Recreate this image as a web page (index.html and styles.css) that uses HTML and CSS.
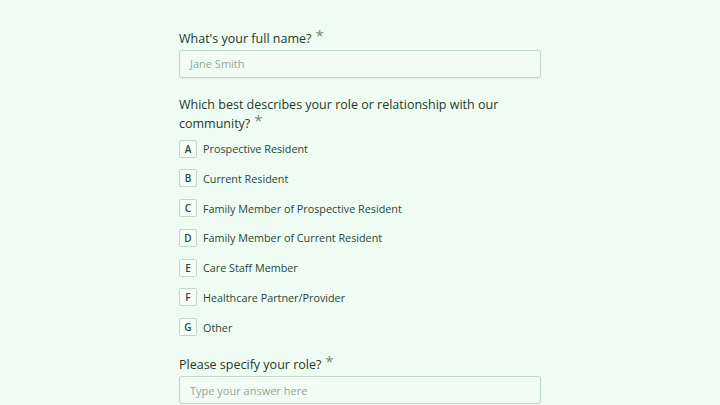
FILE: index.html
```html
<!DOCTYPE html>
<html>
<head>
<meta charset="utf-8">
<link rel="stylesheet" href="styles.css">
</head>
<body>
<main class="form">
  <section class="q q-first">
    <label class="label">What's your full name?<span class="req">*</span></label>
    <div class="input placeholder">Jane Smith</div>
  </section>
  <section class="q">
    <label class="label">Which best describes your role or relationship with our community?<span class="req">*</span></label>
    <ul class="options">
      <li class="opt"><span class="key">A</span><span class="txt">Prospective Resident</span></li>
      <li class="opt"><span class="key">B</span><span class="txt">Current Resident</span></li>
      <li class="opt"><span class="key">C</span><span class="txt">Family Member of Prospective Resident</span></li>
      <li class="opt"><span class="key">D</span><span class="txt">Family Member of Current Resident</span></li>
      <li class="opt"><span class="key">E</span><span class="txt">Care Staff Member</span></li>
      <li class="opt"><span class="key">F</span><span class="txt">Healthcare Partner/Provider</span></li>
      <li class="opt"><span class="key">G</span><span class="txt">Other</span></li>
    </ul>
  </section>
  <section class="q">
    <label class="label">Please specify your role?<span class="req">*</span></label>
    <div class="input placeholder">Type your answer here</div>
  </section>
</main>
</body>
</html>
```
FILE: styles.css
```css
html, body {
  margin: 0;
  padding: 0;
  background: #effcf4;
  font-family: "Open Sans", "Noto Sans", sans-serif;
  color: #22402f;
  overflow: hidden;
}
.form {
  width: 362px;
  margin: 0 0 0 179px;
  padding-top: 28.5px;
  display: flex;
  flex-direction: column;
  gap: 17.5px;
}
.q {
  display: flex;
  flex-direction: column;
}
.label {
  display: block;
  font-size: 12.5px;
  line-height: 19px;
  font-weight: 500;
  color: #1d3a2a;
  margin-bottom: 2px;
}
.req {
  color: #6b8a79;
  font-size: 15px;
  font-weight: 500;
  margin-left: 4px;
  position: relative;
  top: -2px;
  line-height: 0;
}
.input {
  height: 26px;
  border: 1px solid #bfd8c8;
  border-radius: 3px;
  background: #f1fcf5;
  box-shadow: 0 1px 1px rgba(40, 80, 60, 0.08);
  padding: 0 10px;
  display: flex;
  align-items: center;
  font-size: 11px;
}
.placeholder {
  color: #8fa99a;
}
.options {
  list-style: none;
  margin: 4.5px 0 1.5px 0;
  padding: 0;
  display: flex;
  flex-direction: column;
  gap: 11.75px;
}
.opt {
  display: flex;
  align-items: center;
  height: 18px;
}
.key {
  width: 16px;
  height: 16px;
  border: 1px solid #bfd8c8;
  border-radius: 2px;
  background: #f4fdf7;
  display: flex;
  align-items: center;
  justify-content: center;
  font-size: 10px;
  font-weight: 600;
  color: #2c4a39;
  margin-right: 6px;
}
.txt {
  font-size: 10.8px;
  font-weight: 500;
  color: #2a4636;
}
```
